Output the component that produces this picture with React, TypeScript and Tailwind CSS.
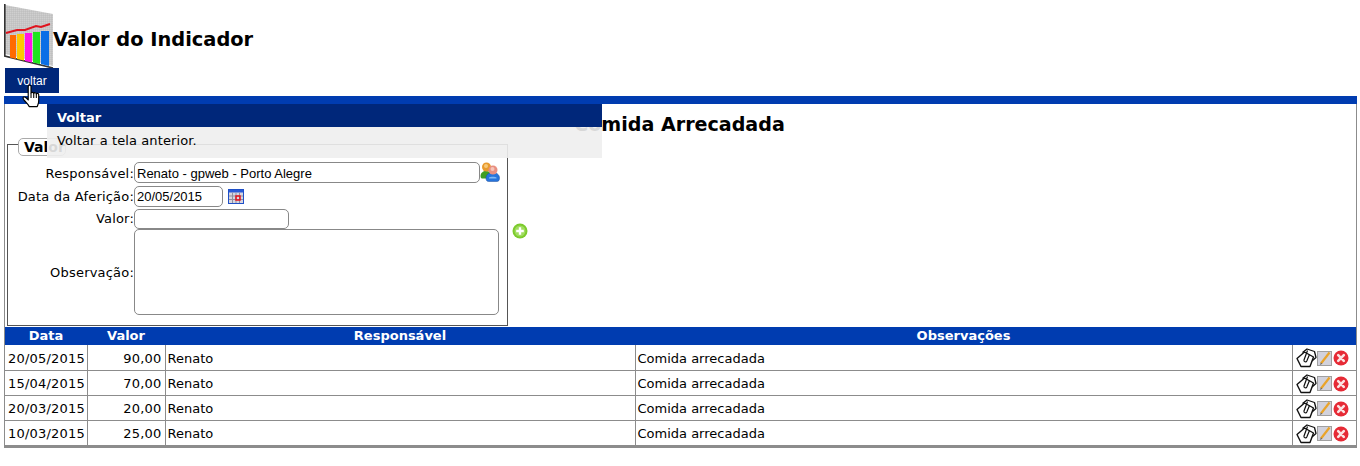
const rows = [
  { data: '20/05/2015', valor: '90,00' },
  { data: '15/04/2015', valor: '70,00' },
  { data: '20/03/2015', valor: '20,00' },
  { data: '10/03/2015', valor: '25,00' },
];

const ChartIcon = () => (
  <svg width="50" height="64" viewBox="0 0 50 64" className="shrink-0">
    <defs>
      <pattern id="grade" width="2" height="2" patternUnits="userSpaceOnUse">
        <rect width="2" height="2" fill="#cfcfcf" />
        <path d="M2 0V2M0 2H2" stroke="#b0b0b0" strokeWidth="0.6" />
      </pattern>
    </defs>
    <path d="M1 1 49 10V62L1 50Z" fill="url(#grade)" />
    <path d="M0.800 0V52L49 64" fill="none" stroke="#333" strokeWidth="1.600" />
    <path d="M6 31h6v24l-6-1.500Z" fill="#ff6a00" />
    <path d="M13 30h7v26.500l-7-1.500Z" fill="#ffc800" />
    <path d="M21 29h7v29.500l-7-1.500Z" fill="#ff14e6" />
    <path d="M29 28h7v32l-7-1.500Z" fill="#1ee61e" />
    <path d="M37 27h8v35l-8-2Z" fill="#0a6ee6" />
    <path d="M2 29 13 26l8 0 11-4 5 1 9-3" fill="none" stroke="#e0141e" strokeWidth="2" />
  </svg>
);

const HandCursor = () => (
  <svg width="20" height="26" viewBox="0 0 18 24" className="absolute left-[22px] top-[84px]">
    <path
      d="M5.500 2.200c0-1.600 2.600-1.600 2.600 0v6.300c.3-1.200 2.400-1.100 2.500.3.300-1.100 2.300-1 2.400.4.400-.9 2.200-.7 2.200.8v5.500c0 2.800-1 3.700-1.400 5.400H6.400C5.700 19 4.200 17.800 2.400 15.700.9 14 .2 12.700 1.200 12c1-.7 2.300.3 4.300 2.700Z"
      fill="#fff"
      stroke="#000"
      strokeWidth="1.100"
      strokeLinejoin="round"
    />
    <path d="M8.100 8.500v4.500M10.600 8.800v4.200M13 9.200v3.800" stroke="#000" strokeWidth="1" fill="none" />
  </svg>
);

const PeopleIcon = () => (
  <svg width="20" height="20" viewBox="0 0 20 20" className="shrink-0">
    <path d="M0.500 14c0-3 2.500-5 5.500-5s5 1.500 5 4v3.500H2c-1 0-1.500-1-1.500-2.500Z" fill="#3f9e22" />
    <circle cx="6.500" cy="5" r="4.500" fill="#e89a2e" />
    <circle cx="6" cy="4" r="2" fill="#f6c878" />
    <path d="M6 16c0-3.500 3-5.500 6.700-5.500S19.500 12.500 19.500 16c0 2.500-1 3.500-2.500 3.500H8.500C7 19.500 6 18.500 6 16Z" fill="#2674dc" stroke="#1d4f9e" strokeWidth="0.500" />
    <circle cx="13" cy="8" r="4.500" fill="#e88f80" />
    <circle cx="12.500" cy="7" r="2" fill="#f6c4b8" />
    <path d="M9 15.500c1-1 6.500-1 7.500 0v1H9Z" fill="#7fb8f4" />
  </svg>
);

const CalendarIcon = () => (
  <svg width="16" height="15" viewBox="0 0 16 15" className="shrink-0">
    <rect x="0.500" y="0.500" width="15" height="14" fill="#d6d6e0" stroke="#1f50c8" />
    <rect x="1" y="1" width="14" height="2.500" fill="#2a5ad8" />
    <path d="M1 7h14M1 10.500h14M4.500 3.500V14M8 3.500V14M11.500 3.500V14" stroke="#8f8f9f" strokeWidth="1" />
    <rect x="8" y="7" width="4" height="4" fill="none" stroke="#e8101a" strokeWidth="1.500" />
  </svg>
);

const PlusIcon = () => (
  <svg width="16" height="16" viewBox="0 0 16 16" className="shrink-0">
    <circle cx="8" cy="8" r="7.500" fill="#7ccb2c" />
    <circle cx="8" cy="8" r="5.500" fill="#a0dc5e" />
    <path d="M8 4.200v7.600M4.200 8h7.600" stroke="#fff" strokeWidth="2.400" />
  </svg>
);

const ClipIcon = () => (
  <svg width="21" height="20" viewBox="0 0 21 20" className="shrink-0 -ml-px">
    <path d="M6.500 4.500 11 1l7.500 2.500 1.500 6-4 3.500" fill="#fff" stroke="#111" strokeWidth="1.300" strokeLinejoin="round" />
    <path d="M1 10.500 8.500 4 17.500 9 14 18.500 5 18.500Z" fill="#fff" stroke="#111" strokeWidth="1.400" strokeLinejoin="round" />
    <path d="M11.500 2.500 8 12c-.5 1.800 2 2.600 2.800 1L13.500 6.500" fill="none" stroke="#111" strokeWidth="1.200" />
  </svg>
);

const EditIcon = () => (
  <svg width="15" height="15" viewBox="0 0 15 15" className="shrink-0">
    <rect x="0.500" y="0.500" width="14" height="14" fill="#d2d2dc" stroke="#a0a0a0" />
    <path d="M12.500 1.500 4 12.500" stroke="#eaa42a" strokeWidth="2.200" />
    <path d="M4 11.500 2.800 14l2.500-1.200" fill="#666" />
  </svg>
);

const DeleteIcon = () => (
  <svg width="16" height="16" viewBox="0 0 16 16" className="shrink-0">
    <circle cx="8" cy="8" r="7.500" fill="#e62b36" />
    <path d="M5.200 5.200l5.600 5.600M10.800 5.200l-5.600 5.600" stroke="#fbe4e4" strokeWidth="2.600" strokeLinecap="round" />
  </svg>
);

export default function App() {
  return (
    <div className="relative w-[1360px] h-[466px] bg-white text-black overflow-hidden font-['DejaVu_Sans',sans-serif] text-[13px]">
      <div className="flex items-center pl-[4px] pt-[4px] h-[68px]">
        <ChartIcon />
        <h1 className="text-[19.400px] font-bold -ml-px mt-[8px]">Valor do Indicador</h1>
      </div>

      <div className="ml-[5px] w-[54px] h-[25px] bg-[#00277a] text-white flex items-center justify-center text-[12px] font-['Liberation_Sans',sans-serif]">
        voltar
      </div>

      <div className="mt-[3px] mx-[4px] h-[352px] border-x border-b-[3px] border-[#8c8c8c] w-[1353px]">
        <div className="h-[8px] bg-[#003cb0] -mx-px" />
        <h2 className="text-[19.100px] font-bold text-center h-[25px] leading-[24px] pt-[9px] box-content pr-[2px]">
          Comida Arrecadada
        </h2>

        <div className="flex items-center h-[188px]">
          <fieldset className="ml-[2px] w-[501px] h-[188px] border border-[#555] pl-[1px]">
            <legend className="ml-[9px] p-0 h-[13px]">
              <span className="block px-[5px] h-[18px] w-[48px] border border-[#aaa] rounded-[5px] font-bold text-[14px] leading-[17px] bg-white">
                Valor
              </span>
            </legend>
            <div className="grid grid-cols-[125px_auto] items-center justify-start tracking-[0.2px] mt-[11px]">
              <label className="text-right">Responsável:</label>
              <div className="flex items-start h-[23px]">
                <input
                  readOnly
                  value="Renato - gpweb - Porto Alegre"
                  className="w-[346px] h-[21px] border border-[#888] rounded-[5px] px-[2px] pt-[2px] text-[13px] tracking-normal font-['Liberation_Sans',sans-serif]"
                />
                <PeopleIcon />
              </div>
              <label className="text-right">Data da Aferição:</label>
              <div className="flex items-center gap-[5px] h-[23px]">
                <input
                  readOnly
                  value="20/05/2015"
                  className="w-[89px] h-[21px] border border-[#888] rounded-[5px] px-[2px] text-[13px] tracking-normal font-['Liberation_Sans',sans-serif]"
                />
                <CalendarIcon />
              </div>
              <label className="text-right">Valor:</label>
              <div className="flex items-center h-[21px]">
                <input readOnly className="w-[155px] h-[20px] border border-[#888] rounded-[5px]" />
              </div>
              <label className="text-right pt-[2px]">Observação:</label>
              <textarea readOnly className="w-[365px] h-[86px] border border-[#888] rounded-[5px] resize-none block" />
            </div>
          </fieldset>
          <div className="ml-[4px] -mt-[3px]">
            <PlusIcon />
          </div>
        </div>

        <table className="w-[1351px] mt-[1px] border-collapse table-fixed">
          <colgroup>
            <col className="w-[82px]" />
            <col className="w-[78px]" />
            <col className="w-[470px]" />
            <col className="w-[657px]" />
            <col className="w-[64px]" />
          </colgroup>
          <thead>
            <tr className="bg-[#003cb0] text-white h-[18px] text-[13px] leading-[16px]">
              <th>Data</th>
              <th>Valor</th>
              <th>Responsável</th>
              <th>Observações</th>
              <th />
            </tr>
          </thead>
          <tbody>
            {rows.map((row) => (
              <tr key={row.data} className="h-[25px] border-b border-[#8c8c8c] last:border-b-0">
                <td className="border-r border-[#8c8c8c] px-[3px] pt-[2px] tracking-[0.2px]">{row.data}</td>
                <td className="border-r border-[#8c8c8c] px-[3px] pt-[2px] tracking-[0.2px] text-right">{row.valor}</td>
                <td className="border-r border-[#8c8c8c] px-[2px] pt-[2px]">Renato</td>
                <td className="border-r border-[#8c8c8c] px-[2px] pt-[2px]">Comida arrecadada</td>
                <td className="px-0 pt-[2px]">
                  <div className="flex items-center justify-end pr-[7px]">
                    <ClipIcon />
                    <EditIcon />
                    <span className="w-px" />
                    <DeleteIcon />
                  </div>
                </td>
              </tr>
            ))}
          </tbody>
        </table>
      </div>

      <div className="absolute left-[47px] top-[104px] w-[555px] h-[54px] bg-[#eeeeee]/90">
        <div className="h-[23px] bg-[#00277a] text-white font-bold px-[10px] leading-[27px]">Voltar</div>
        <div className="px-[10px] pt-[5px] leading-[18px] tracking-[0.1px]">Voltar a tela anterior.</div>
      </div>

      <HandCursor />
    </div>
  );
}
